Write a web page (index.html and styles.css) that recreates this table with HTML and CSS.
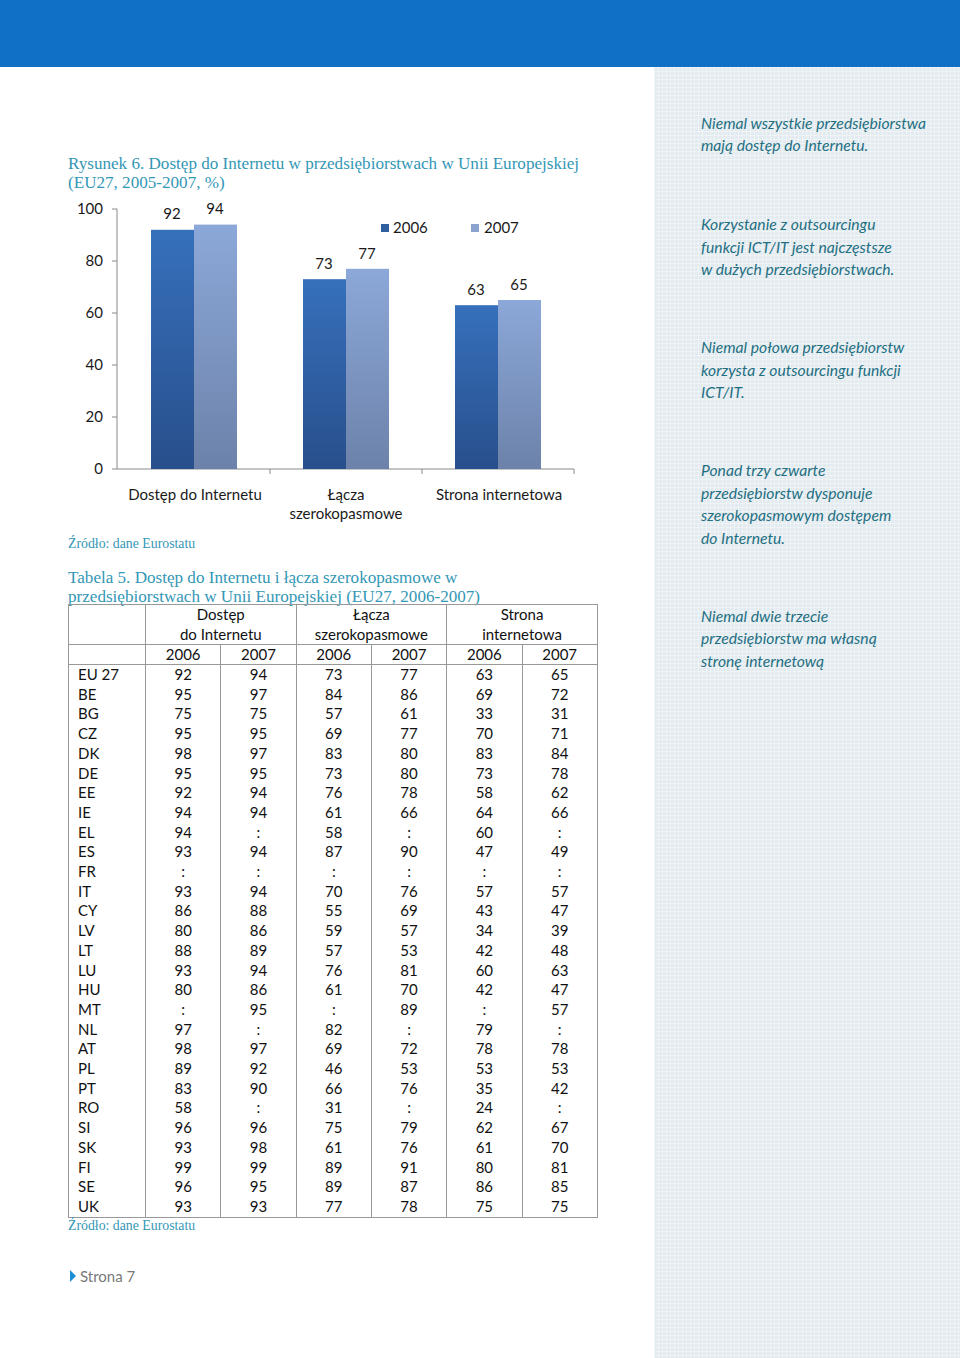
FILE: index.html
```html
<!DOCTYPE html>
<html lang="pl">
<head>
<meta charset="utf-8">
<title>Strona 7</title>
<link rel="stylesheet" href="styles.css">
</head>
<body>
<header class="topbar"></header>
<div class="page">
  <main class="main">
    <h2 class="caption caption-fig">Rysunek 6. Dostęp do Internetu w przedsiębiorstwach w Unii Europejskiej<br>(EU27, 2005-2007, %)</h2>
    <svg class="chart" width="532" height="336" viewBox="0 0 532 336" xmlns="http://www.w3.org/2000/svg">
      <defs>
        <linearGradient id="gDark" x1="0" y1="0" x2="0" y2="1">
          <stop offset="0" stop-color="#3670bb"/>
          <stop offset="1" stop-color="#284f8c"/>
        </linearGradient>
        <linearGradient id="gLight" x1="0" y1="0" x2="0" y2="1">
          <stop offset="0" stop-color="#8ca8d8"/>
          <stop offset="1" stop-color="#6c82aa"/>
        </linearGradient>
      </defs>
      <g class="axis">
        <line x1="49" y1="14" x2="49" y2="274"/>
        <line x1="44" y1="14" x2="49" y2="14"/>
        <line x1="44" y1="66" x2="49" y2="66"/>
        <line x1="44" y1="118" x2="49" y2="118"/>
        <line x1="44" y1="170" x2="49" y2="170"/>
        <line x1="44" y1="222" x2="49" y2="222"/>
        <line x1="44" y1="274" x2="49" y2="274"/>
        <line x1="49" y1="274" x2="506" y2="274"/>
        <line x1="202" y1="274" x2="202" y2="279"/>
        <line x1="354" y1="274" x2="354" y2="279"/>
        <line x1="506" y1="274" x2="506" y2="279"/>
      </g>
      <g class="ylab">
        <text x="35" y="19">100</text>
        <text x="35" y="71">80</text>
        <text x="35" y="123">60</text>
        <text x="35" y="175">40</text>
        <text x="35" y="227">20</text>
        <text x="35" y="279">0</text>
      </g>
      <g>
        <rect x="83" y="34.8" width="43" height="239.2" fill="url(#gDark)"/>
        <rect x="126" y="29.6" width="43" height="244.4" fill="url(#gLight)"/>
        <rect x="235" y="84.2" width="43" height="189.8" fill="url(#gDark)"/>
        <rect x="278" y="73.8" width="43" height="200.2" fill="url(#gLight)"/>
        <rect x="387" y="110.2" width="43" height="163.8" fill="url(#gDark)"/>
        <rect x="430" y="105" width="43" height="169" fill="url(#gLight)"/>
      </g>
      <g class="vlab">
        <text x="104" y="24">92</text>
        <text x="147" y="19">94</text>
        <text x="256" y="74">73</text>
        <text x="299" y="64">77</text>
        <text x="408" y="100">63</text>
        <text x="451" y="95">65</text>
      </g>
      <g class="legend">
        <rect x="313" y="29" width="8" height="8" fill="#2f5f9f"/>
        <text x="325" y="38">2006</text>
        <rect x="403" y="29" width="8" height="8" fill="#8aa3cf"/>
        <text x="416" y="38">2007</text>
      </g>
      <g class="xlab">
        <text x="127" y="305">Dostęp do Internetu</text>
        <text x="278" y="305">Łącza</text>
        <text x="278" y="324">szerokopasmowe</text>
        <text x="431" y="305">Strona internetowa</text>
      </g>
    </svg>
    <p class="source">Źródło: dane Eurostatu</p>

    <h2 class="caption caption-tab">Tabela 5. Dostęp do Internetu i łącza szerokopasmowe w<br>przedsiębiorstwach w Unii Europejskiej (EU27, 2006-2007)</h2>
    <table class="data">
      <colgroup>
        <col class="c-first"><col class="c-n"><col class="c-n"><col class="c-n"><col class="c-n"><col class="c-n"><col class="c-n">
      </colgroup>
      <thead>
        <tr class="h1">
          <th></th>
          <th colspan="2">Dostęp<br>do Internetu</th>
          <th colspan="2">Łącza<br>szerokopasmowe</th>
          <th colspan="2">Strona<br>internetowa</th>
        </tr>
        <tr class="h2">
          <th></th><th>2006</th><th>2007</th><th>2006</th><th>2007</th><th>2006</th><th>2007</th>
        </tr>
      </thead>
      <tbody>
        <tr><td>EU 27</td><td>92</td><td>94</td><td>73</td><td>77</td><td>63</td><td>65</td></tr>
        <tr><td>BE</td><td>95</td><td>97</td><td>84</td><td>86</td><td>69</td><td>72</td></tr>
        <tr><td>BG</td><td>75</td><td>75</td><td>57</td><td>61</td><td>33</td><td>31</td></tr>
        <tr><td>CZ</td><td>95</td><td>95</td><td>69</td><td>77</td><td>70</td><td>71</td></tr>
        <tr><td>DK</td><td>98</td><td>97</td><td>83</td><td>80</td><td>83</td><td>84</td></tr>
        <tr><td>DE</td><td>95</td><td>95</td><td>73</td><td>80</td><td>73</td><td>78</td></tr>
        <tr><td>EE</td><td>92</td><td>94</td><td>76</td><td>78</td><td>58</td><td>62</td></tr>
        <tr><td>IE</td><td>94</td><td>94</td><td>61</td><td>66</td><td>64</td><td>66</td></tr>
        <tr><td>EL</td><td>94</td><td>:</td><td>58</td><td>:</td><td>60</td><td>:</td></tr>
        <tr><td>ES</td><td>93</td><td>94</td><td>87</td><td>90</td><td>47</td><td>49</td></tr>
        <tr><td>FR</td><td>:</td><td>:</td><td>:</td><td>:</td><td>:</td><td>:</td></tr>
        <tr><td>IT</td><td>93</td><td>94</td><td>70</td><td>76</td><td>57</td><td>57</td></tr>
        <tr><td>CY</td><td>86</td><td>88</td><td>55</td><td>69</td><td>43</td><td>47</td></tr>
        <tr><td>LV</td><td>80</td><td>86</td><td>59</td><td>57</td><td>34</td><td>39</td></tr>
        <tr><td>LT</td><td>88</td><td>89</td><td>57</td><td>53</td><td>42</td><td>48</td></tr>
        <tr><td>LU</td><td>93</td><td>94</td><td>76</td><td>81</td><td>60</td><td>63</td></tr>
        <tr><td>HU</td><td>80</td><td>86</td><td>61</td><td>70</td><td>42</td><td>47</td></tr>
        <tr><td>MT</td><td>:</td><td>95</td><td>:</td><td>89</td><td>:</td><td>57</td></tr>
        <tr><td>NL</td><td>97</td><td>:</td><td>82</td><td>:</td><td>79</td><td>:</td></tr>
        <tr><td>AT</td><td>98</td><td>97</td><td>69</td><td>72</td><td>78</td><td>78</td></tr>
        <tr><td>PL</td><td>89</td><td>92</td><td>46</td><td>53</td><td>53</td><td>53</td></tr>
        <tr><td>PT</td><td>83</td><td>90</td><td>66</td><td>76</td><td>35</td><td>42</td></tr>
        <tr><td>RO</td><td>58</td><td>:</td><td>31</td><td>:</td><td>24</td><td>:</td></tr>
        <tr><td>SI</td><td>96</td><td>96</td><td>75</td><td>79</td><td>62</td><td>67</td></tr>
        <tr><td>SK</td><td>93</td><td>98</td><td>61</td><td>76</td><td>61</td><td>70</td></tr>
        <tr><td>FI</td><td>99</td><td>99</td><td>89</td><td>91</td><td>80</td><td>81</td></tr>
        <tr><td>SE</td><td>96</td><td>95</td><td>89</td><td>87</td><td>86</td><td>85</td></tr>
        <tr><td>UK</td><td>93</td><td>93</td><td>77</td><td>78</td><td>75</td><td>75</td></tr>
      </tbody>
    </table>
    <p class="source source-tab">Źródło: dane Eurostatu</p>

    <footer class="pagefoot">
      <span class="tri"></span><span class="pagenum">Strona 7</span>
    </footer>
  </main>
  <aside class="side">
    <p class="note note-1">Niemal wszystkie przedsiębiorstwa<br>mają dostęp do Internetu.</p>
    <p class="note">Korzystanie z outsourcingu<br>funkcji ICT/IT jest najczęstsze<br>w dużych przedsiębiorstwach.</p>
    <p class="note">Niemal połowa przedsiębiorstw<br>korzysta z outsourcingu funkcji<br>ICT/IT.</p>
    <p class="note">Ponad trzy czwarte<br>przedsiębiorstw dysponuje<br>szerokopasmowym dostępem<br>do Internetu.</p>
    <p class="note">Niemal dwie trzecie<br>przedsiębiorstw ma własną<br>stronę internetową</p>
  </aside>
</div>
</body>
</html>
```

FILE: styles.css
```css
html, body {
  margin: 0;
  padding: 0;
  background: #ffffff;
}

body {
  width: 960px;
  height: 1358px;
  overflow: hidden;
  font-family: Lato, "Open Sans", sans-serif;
  color: #1a1a1a;
}

.topbar {
  height: 67px;
  background: #1070c4;
}

.page {
  display: flex;
  height: 1291px;
}

.main {
  width: 586px;
  padding-left: 68px;
  display: flex;
  flex-direction: column;
}

.side {
  width: 259px;
  padding: 44.5px 0 0 47px;
  background-color: #e3ebf0;
  background-image:
    linear-gradient(to right, rgba(255,255,255,0.35) 1px, transparent 1px),
    linear-gradient(to bottom, rgba(255,255,255,0.35) 1px, transparent 1px);
  background-size: 4px 4px;
}

.caption {
  margin: 0;
  font-family: "Liberation Serif", "DejaVu Serif", serif;
  font-weight: normal;
  font-size: 17.1px;
  line-height: 19px;
  color: #3397b6;
  white-space: nowrap;
}

.caption-fig {
  margin-top: 86.5px;
}

.chart {
  display: block;
  margin-top: 3.5px;
  overflow: visible;
}

.chart .axis line {
  stroke: #8a8a8a;
  stroke-width: 1;
}

.chart text {
  font-family: Lato, "Open Sans", sans-serif;
  font-size: 15px;
  fill: #1a1a1a;
}

.chart .ylab text {
  text-anchor: end;
}

.chart .vlab text,
.chart .xlab text {
  text-anchor: middle;
}

.source {
  margin: 5px 0 0;
  font-family: "Liberation Serif", "DejaVu Serif", serif;
  font-size: 13.8px;
  line-height: 16px;
  color: #3397b6;
}

.caption-tab {
  margin-top: 15.5px;
}

.data {
  margin-top: -1.5px;
  width: 529px;
  border-collapse: collapse;
  table-layout: fixed;
  font-size: 15px;
  color: #111;
}

.c-first { width: 77px; }
.c-n { width: 75.3px; }

.data th,
.data td {
  padding: 0;
  font-weight: normal;
  text-align: center;
  border-left: 1px solid #999;
  border-right: 1px solid #999;
}

.data thead tr.h1 th {
  height: 39px;
  line-height: 19.5px;
  border-top: 1px solid #999;
  border-bottom: 1px solid #999;
}

.data thead tr.h2 th {
  height: 19px;
  line-height: 19px;
  border-bottom: 1px solid #999;
}

.data tbody td {
  height: 19.7px;
  line-height: 19.7px;
}

.data tbody td:first-child {
  text-align: left;
  padding-left: 9px;
}

.data tbody tr:last-child td {
  border-bottom: 1px solid #999;
}

.source-tab {
  margin-top: 0;
}

.pagefoot {
  margin-top: 32px;
  display: flex;
  align-items: center;
  gap: 4px;
  padding-left: 2px;
}

.tri {
  width: 0;
  height: 0;
  border-top: 6px solid transparent;
  border-bottom: 6px solid transparent;
  border-left: 6px solid #1b8fd4;
}

.pagenum {
  font-size: 15px;
  line-height: 20px;
  color: #7a7a7a;
}

.note {
  margin: 0 0 55.5px;
  font-style: italic;
  font-size: 15.7px;
  line-height: 22.5px;
  color: #236f82;
  white-space: nowrap;
}

.note-1 {
  margin-bottom: 56.5px;
}
```
